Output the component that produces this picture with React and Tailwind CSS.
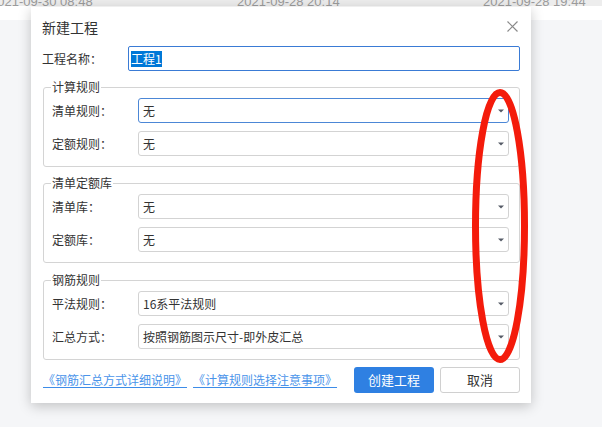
import React from "react";

function Select({ value, focused }) {
  return (
    <div
      className={
        focused
          ? "flex-1 h-[25px] rounded-[3px] border border-[#4c87d6] bg-white flex items-center pl-[4px] pr-[4px]"
          : "flex-1 h-[25px] rounded-[3px] border border-[#d3d3d3] bg-white flex items-center pl-[4px] pr-[4px]"
      }
    >
      <span className="flex-1 text-[12px] leading-[16px] text-[#333]">{value}</span>
      <svg width="6" height="4" viewBox="0 0 6 4">
        <path d="M0 0.5h6L3 3.5z" fill="#555a66" />
      </svg>
    </div>
  );
}

function Row({ label, value, focused, extra }) {
  return (
    <div className={"flex items-center " + (extra || "")}>
      <span className="w-[86px] text-[12px] leading-[16px] text-[#333]">{label}</span>
      <Select value={value} focused={focused} />
    </div>
  );
}

function Group({ title, children, extra }) {
  return (
    <fieldset
      className={
        "ml-px border border-[#d4d4d4] rounded-[3px] pl-[8px] pr-[10px] pt-[3px] pb-[10px] " +
        extra
      }
    >
      <legend className="ml-[-1px] px-px text-[12px] leading-[16px] text-[#333]">{title}</legend>
      {children}
    </fieldset>
  );
}

export default function App() {
  return (
    <div className="relative w-[602px] h-[427px] overflow-hidden bg-[#f5f6f8] font-['Noto_Sans_CJK_SC','Microsoft_YaHei',sans-serif]">
      <div className="h-[20px] bg-white">
        <div className="h-[6px] bg-[#ededed] flex font-['Liberation_Sans',sans-serif] text-[13px] leading-[13px] text-[#9b9b9b] whitespace-nowrap">
          <span className="ml-[-10px] w-[247px] mt-[-5px]">2021-09-30 08:48</span>
          <span className="w-[246px] mt-[-5px]">2021-09-28 20:14</span>
          <span className="mt-[-5px]">2021-09-28 19:44</span>
        </div>
      </div>

      <div className="absolute left-[31px] top-[7px] w-[500px] h-[396px] bg-white shadow-[0_3px_12px_rgba(0,0,0,0.22)] flex flex-col px-[11px]">
        <div className="h-[39px] flex items-center justify-between">
          <span className="text-[14px] leading-[20px] text-[#333]">新建工程</span>
          <svg className="mr-[2px]" width="11" height="11" viewBox="0 0 11 11">
            <path d="M0.5 0.5L10.5 10.5M10.5 0.5L0.5 10.5" stroke="#8a8a8a" strokeWidth="1.2" />
          </svg>
        </div>

        <div className="flex items-center">
          <span className="w-[86px] text-[12px] leading-[16px] text-[#333]">工程名称：</span>
          <div className="flex-1 h-[25px] border border-[#3a7bd5] rounded-[2px] flex items-center pl-[2px]">
            <span className="bg-[#0078d7] text-white text-[12px] leading-[16px]">工程1</span>
          </div>
        </div>

        <Group title="计算规则" extra="mt-[8px]">
          <Row label="清单规则：" value="无" focused />
          <Row label="定额规则：" value="无" extra="mt-[8px]" />
        </Group>

        <Group title="清单定额库" extra="mt-[8px]">
          <Row label="清单库：" value="无" />
          <Row label="定额库：" value="无" extra="mt-[8px]" />
        </Group>

        <Group title="钢筋规则" extra="mt-[9px]">
          <Row label="平法规则：" value="16系平法规则" />
          <Row label="汇总方式：" value="按照钢筋图示尺寸-即外皮汇总" extra="mt-[8px]" />
        </Group>

        <div className="mt-[7px] flex items-center">
          <span className="ml-px text-[12px] leading-[16px] text-[#4a94ea] underline underline-offset-2 decoration-[#3d8ce8]">
            《钢筋汇总方式详细说明》
          </span>
          <span className="ml-[6px] text-[12px] leading-[16px] text-[#4a94ea] underline underline-offset-2 decoration-[#3d8ce8]">
            《计算规则选择注意事项》
          </span>
          <button className="ml-auto w-[80px] h-[26px] rounded-[3px] bg-[#2f80e2] text-white text-[13px]">
            创建工程
          </button>
          <button className="ml-[6px] w-[80px] h-[26px] rounded-[3px] border border-[#d0d0d0] bg-white text-[#333] text-[13px]">
            取消
          </button>
        </div>
      </div>

      <svg className="absolute left-0 top-0 pointer-events-none" width="602" height="427" viewBox="0 0 602 427">
        <ellipse cx="500" cy="226" rx="24.5" ry="133.5" fill="none" stroke="#f41b0b" strokeWidth="7" />
      </svg>
    </div>
  );
}
